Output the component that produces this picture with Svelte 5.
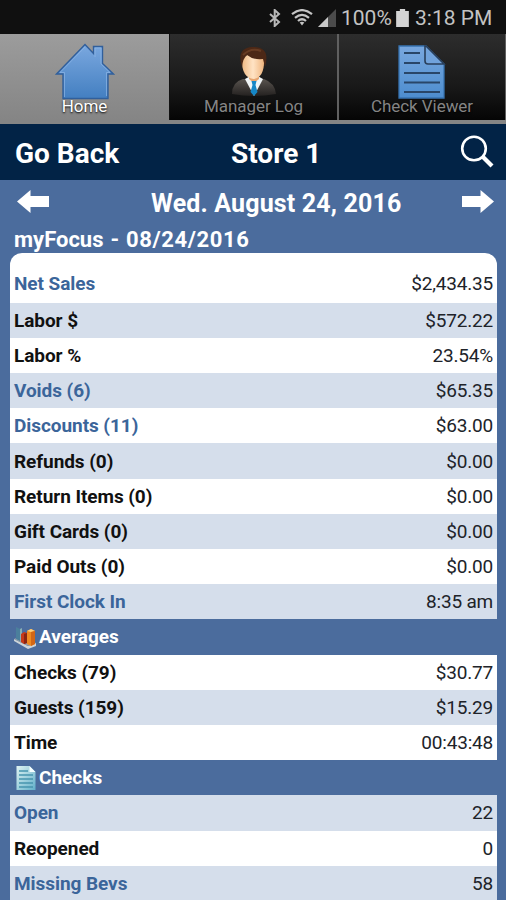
<script>
  const summary = [
    ['Net Sales', '$2,434.35', true],
    ['Labor $', '$572.22', false],
    ['Labor %', '23.54%', false],
    ['Voids (6)', '$65.35', true],
    ['Discounts (11)', '$63.00', true],
    ['Refunds (0)', '$0.00', false],
    ['Return Items (0)', '$0.00', false],
    ['Gift Cards (0)', '$0.00', false],
    ['Paid Outs (0)', '$0.00', false],
    ['First Clock In', '8:35 am', true]
  ];
  const averages = [
    ['Checks (79)', '$30.77', false],
    ['Guests (159)', '$15.29', false],
    ['Time', '00:43:48', false]
  ];
  const checks = [
    ['Open', '22', true],
    ['Reopened', '0', false],
    ['Missing Bevs', '58', true]
  ];
</script>

{#snippet row([label, value, link], shaded)}
  <div class="row" class:shaded>
    <span class="label" class:link>{label}</span>
    <span class="value">{value}</span>
  </div>
{/snippet}

<div class="screen">
  <div class="status">
    <svg class="bt" width="12" height="18" viewBox="0 0 12 18"><path d="M1 5l9 8-4.300 4V1L10 5l-9 8" fill="none" stroke="#b8b8b8" stroke-width="2"/></svg>
    <svg class="wifi" width="22" height="17" viewBox="0 0 22 17" fill="none" stroke="#c4c4c4" stroke-width="2.200"><path d="M1 5.200Q11-3 21 5.200M4 8.800Q11 3 18 8.800M7 12Q11 8.500 15 12"/><path d="M8.700 13.600L11 16.500l2.300-2.900Q11 12 8.700 13.600z" fill="#c4c4c4" stroke="none"/></svg>
    <svg class="signal" width="18" height="18" viewBox="0 0 18 18"><path d="M18 0v18H0z" fill="#4b4b4b"/><path d="M10 8v10H0z" fill="#c9c9c9"/></svg>
    <span class="pct">100%</span>
    <svg class="battery" width="13" height="18" viewBox="0 0 12 17"><path d="M3.500 0h5v2H12v15H0V2h3.500z" fill="#d4d4d4"/></svg>
    <span class="clock">3:18 PM</span>
  </div>

  <nav class="tabs">
    <div class="tab active">
      <svg width="60" height="57" viewBox="0 0 60 57">
        <defs><linearGradient id="house" x2="0" y2="1"><stop offset="0" stop-color="#7ba8df"/><stop offset="1" stop-color="#437fc1"/></linearGradient></defs>
        <path d="M30 1.500L1.500 31H8v24.500h45V31h5.500L47.500 20.500V3.500h-9v7z" fill="url(#house)" stroke="#315f9b" stroke-width="1.400"/>
        <path d="M30 4L5 29.500h4.500V54M51.500 53V29.500H55L46 21V5h-6v9" fill="none" stroke="#91b8e8" stroke-width="1" opacity=".65"/>
      </svg>
      <span>Home</span>
    </div>
    <div class="tab">
      <svg width="60" height="57" viewBox="0 0 60 57">
        <defs>
          <linearGradient id="suit" x2="0" y2="1"><stop offset="0" stop-color="#59544f"/><stop offset="1" stop-color="#242120"/></linearGradient>
          <linearGradient id="face"><stop offset="0" stop-color="#eeb984"/><stop offset=".5" stop-color="#ffe3c4"/><stop offset="1" stop-color="#efb57e"/></linearGradient>
        </defs>
        <path d="M8 51q0-12 11-15h21q11 4 12 15-22 4-44 0z" fill="url(#suit)"/>
        <path d="M21 36l9 17 9-17-9-5z" fill="#f1f5f6"/>
        <path d="M25 29v7l5 4 5-4v-7z" fill="#e5a570"/>
        <path d="M27.500 38h5l-1 4 2 7-3.500 4-3.500-4 2-7z" fill="#1687c7"/>
        <path d="M18 15q-1 20 12 21 11-2 10-21-10-9-22 0z" fill="url(#face)"/>
        <path d="M18 24Q12 5 28 4q19-1 13 20l-2-8q-10 1-16-4-4 3-5 12z" fill="#4c2816"/>
        <path d="M19 12q8-8 18-4" fill="none" stroke="#79492d" stroke-width="2" opacity=".6"/>
      </svg>
      <span>Manager Log</span>
    </div>
    <div class="tab">
      <svg width="60" height="57" viewBox="0 0 60 57">
        <defs><linearGradient id="doc" x2="0" y2="1"><stop offset="0" stop-color="#79a8df"/><stop offset="1" stop-color="#4d8dce"/></linearGradient></defs>
        <path d="M7 3h27l18 18v34H7z" fill="url(#doc)" stroke="#3773b1" stroke-width="1.300"/>
        <path d="M34 3h-1v15q0 3 3 3h16z" fill="#71a3dc" stroke="#293f5b" stroke-width="1.600"/>
        <path d="M12 10h16M12 20h16M12 30h36M12 39.500h36M12 49h36" stroke="#294668" stroke-width="2.200"/>
      </svg>
      <span>Check Viewer</span>
    </div>
  </nav>

  <header>
    <span class="back">Go Back</span>
    <span class="title">Store 1</span>
    <svg class="search" width="34" height="34" viewBox="0 0 34 34"><circle cx="14" cy="13.500" r="11.800" fill="none" stroke="#fff" stroke-width="2.600"/><path d="M22.500 21.500l9.500 9.500" stroke="#fff" stroke-width="4.200"/></svg>
  </header>

  <div class="date">
    <svg width="33" height="23" viewBox="0 0 33 23"><path d="M0 11.500L13.500 0v6H32v11H13.500v6z" fill="#fff"/></svg>
    <span>Wed. August 24, 2016</span>
    <svg width="33" height="23" viewBox="0 0 33 23"><path d="M33 11.500L19.500 0v6H1v11h18.500v6z" fill="#fff"/></svg>
  </div>
  <div class="focus">myFocus - <span>08/24/2016</span></div>

  <main>
    <section class="first">
      {#each summary as item, i}{@render row(item, i % 2 === 1)}{/each}
    </section>
    <h2>
      <svg width="24" height="24" viewBox="0 0 24 24">
        <path d="M0 14l14 7 8-3v3l-8 3L0 16z" fill="#ccd4d8"/><path d="M0 14l7-3 15 7-8 3z" fill="#969fa9"/>
        <path d="M2 2l4 2v12l-4-2z" fill="#4b7f9c"/><path d="M6 4l2-1v12l-2 1z" fill="#87aeb5"/>
        <path d="M7 9l3-2 3 1v10l-3 1-3-2z" fill="#c73918"/><path d="M10 9l3-1v10l-3 1z" fill="#882512"/>
        <path d="M13 6l4-2 4 2v13l-4 2-4-2z" fill="#ef8a21"/><path d="M13 6l4-2 4 2-4 1z" fill="#ffd17d"/><path d="M17 7l4-1v13l-4 2z" fill="#d36716"/>
      </svg>
      <span>Averages</span>
    </h2>
    <section>
      {#each averages as item, i}{@render row(item, i % 2 === 1)}{/each}
    </section>
    <h2>
      <svg width="24" height="24" viewBox="0 0 24 24">
        <defs><linearGradient id="sheet" x2="1" y2="1"><stop offset="0" stop-color="#dff3f2"/><stop offset="1" stop-color="#61b0ca"/></linearGradient></defs>
        <path d="M2.500 0h13l6 6v18h-19z" fill="url(#sheet)"/><path d="M15.500 0v6h6z" fill="#f5ffff"/>
        <path d="M5 5h9M5 9h14M5 13h14M5 17h14M5 21h14" stroke="#4795af" stroke-width="1.300"/>
      </svg>
      <span>Checks</span>
    </h2>
    <section>
      {#each checks as item, i}{@render row(item, i % 2 === 0)}{/each}
    </section>
  </main>
</div>

<style>
  .screen {
    width: 506px;
    height: 900px;
    overflow: hidden;
    display: flex;
    flex-direction: column;
    background: #4b6c9d;
    font-family: Roboto, "Liberation Sans", sans-serif;
    white-space: nowrap;
  }
  .status {
    flex: 0 0 34px;
    box-sizing: border-box;
    display: flex;
    align-items: center;
    justify-content: flex-end;
    padding: 1px 13px 0 0;
    background: #101010;
    color: #c3c3c3;
    font-size: 21px;
    line-height: 32px;
  }
  .status span { padding-top: 1px; }
  .bt { margin-right: 10px; }
  .wifi { margin-right: 5px; }
  .signal { margin-right: 5px; }
  .pct { width: 51px; }
  .battery { margin: 0 6px 0 4px; }
  .clock { width: 78px; }
  .tabs {
    flex: 0 0 90px;
    box-sizing: border-box;
    display: grid;
    grid-template-columns: 169px 168px 169px;
    border-bottom: 4px solid #858585;
  }
  .tab {
    box-sizing: border-box;
    display: flex;
    flex-direction: column;
    align-items: center;
    padding-top: 9px;
    background: linear-gradient(#2d2d2d, #191919 60%, #050505);
    border-left: 2px solid #606060;
    color: #858585;
    font-size: 17px;
    line-height: 20px;
  }
  .tab svg { flex: none; }
  .tab span { margin-top: -4px; letter-spacing: -.05px; text-shadow: 0 1px 2px #000; }
  .tab:nth-child(2) { border-left: 1px solid #111; }
  .tab:last-child { border-right: 1px solid #606060; }
  .active {
    background: linear-gradient(#9c9c9c, #858585);
    border-left: 0;
    color: #fff;
  }
  header {
    flex: 0 0 56px;
    display: grid;
    grid-template-columns: 216px auto 1fr;
    align-items: center;
    box-sizing: border-box;
    padding: 2px 12px 0 15px;
    background: #022346;
    color: #fff;
    font-size: 28px;
    font-weight: 700;
  }
  .search { justify-self: end; margin-top: -3px; }
  .date {
    flex: 0 0 44px;
    display: flex;
    align-items: center;
    box-sizing: border-box;
    padding: 0 12px 1px 17px;
    color: #fff;
    font-size: 25px;
    font-weight: 700;
  }
  .date span { padding-top: 4px; margin: 0 auto 0 101px; letter-spacing: .15px; }
  .focus {
    flex: none;
    height: 29px;
    padding-left: 14px;
    color: #fff;
    font-size: 22px;
    font-weight: 700;
    line-height: 31px;
    word-spacing: 1.500px;
  }
  .focus span { letter-spacing: .6px; }
  main { margin: 0 9px 0 10px; }
  .first { border-radius: 12px 12px 0 0; overflow: hidden; }
  .row {
    height: 35.2px;
    display: flex;
    align-items: center;
    justify-content: space-between;
    box-sizing: border-box;
    padding: 1px 4px 0;
    background: #fff;
    font-size: 19px;
    line-height: 34px;
  }
  .first .row:first-child { height: 49.700px; padding-top: 13px; }
  .shaded { background: #d5deeb; }
  .label { color: #111; font-weight: 700; letter-spacing: -.06px; }
  .link { color: #3b659a; }
  .value { color: #202329; font-weight: 400; letter-spacing: -.2px; }
  h2 {
    height: 35.2px;
    margin: 0;
    padding-left: 4px;
    display: flex;
    align-items: center;
    gap: 1px;
    color: #fff;
    font-size: 19px;
    font-weight: 700;
  }
</style>
